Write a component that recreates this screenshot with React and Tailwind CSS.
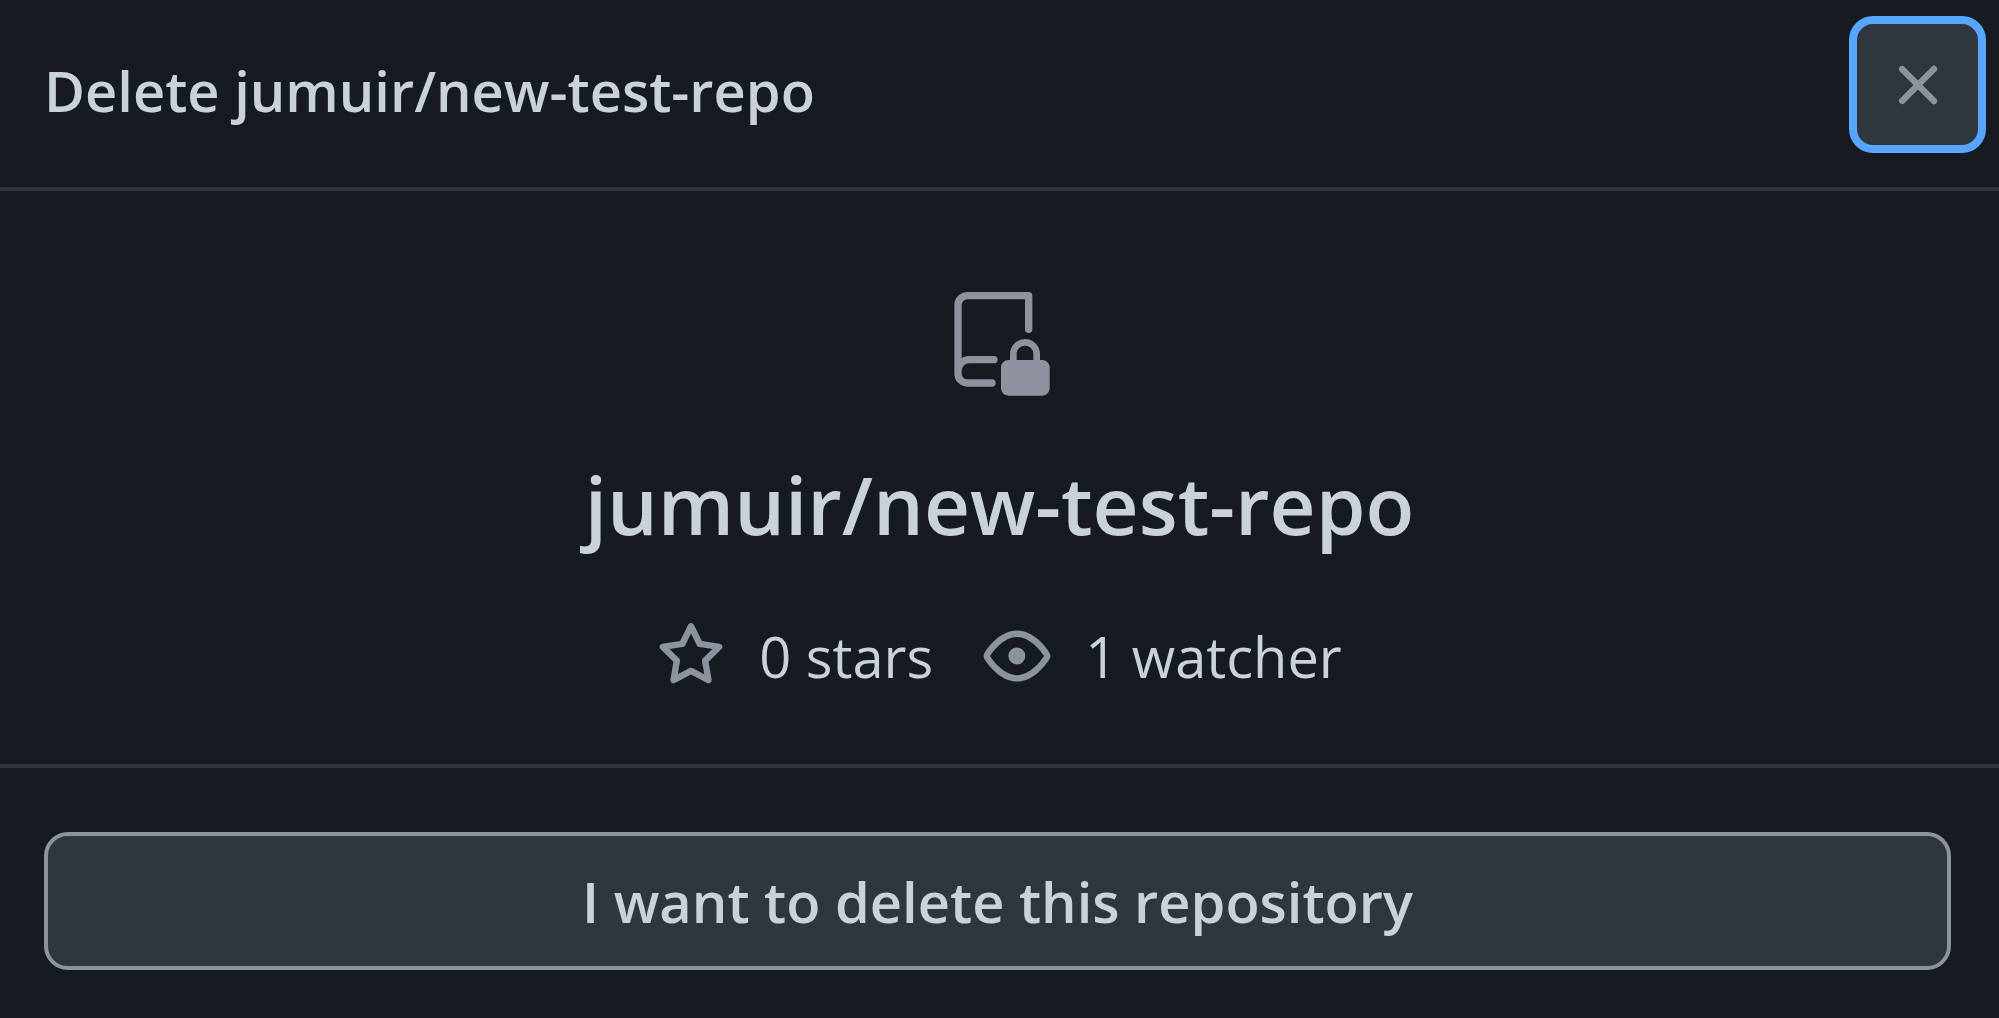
function CloseIcon() {
  return (
    <svg viewBox="0 0 16 16" className="size-17 fill-[#8b949e]" aria-hidden="true">
      <path d="M3.72 3.72a.75.75 0 0 1 1.06 0L8 6.94l3.22-3.22a.75.75 0 1 1 1.06 1.06L9.06 8l3.22 3.22a.75.75 0 1 1-1.06 1.06L8 9.06l-3.22 3.22a.75.75 0 0 1-1.06-1.06L6.94 8 3.72 4.78a.75.75 0 0 1 0-1.06Z" />
    </svg>
  );
}

function RepoLockedIcon() {
  return (
    <svg viewBox="0 0 288 312" className="ml-1 h-26 w-24 text-[#8d929e]" fill="none" stroke="currentColor" strokeLinecap="round" aria-hidden="true">
      <path strokeWidth="22" strokeLinejoin="round" d="M224 112V11H40a28 28 0 0 0-28 28v206a28 28 0 0 0 28 28h74M120 203H46a34 34 0 0 0-34 34" />
      <path strokeWidth="20" d="M178 212v-26a35 35 0 0 1 70 0v26" />
      <rect x="141" y="204" width="146" height="107" rx="22" fill="currentColor" stroke="none" />
    </svg>
  );
}

function StarIcon() {
  return (
    <svg viewBox="0 0 16 16" className="size-17 fill-[#8b949e]" aria-hidden="true">
      <path d="M8 .25a.75.75 0 0 1 .673.418l1.882 3.815 4.21.612a.75.75 0 0 1 .416 1.279l-3.046 2.97.719 4.192a.751.751 0 0 1-1.088.791L8 12.347l-3.766 1.98a.75.75 0 0 1-1.088-.79l.72-4.194L.818 6.374a.75.75 0 0 1 .416-1.28l4.21-.611L7.327.668A.75.75 0 0 1 8 .25Zm0 2.445L6.615 5.5a.75.75 0 0 1-.564.41l-3.097.45 2.24 2.184a.75.75 0 0 1 .216.664l-.528 3.084 2.769-1.456a.75.75 0 0 1 .698 0l2.77 1.456-.53-3.084a.75.75 0 0 1 .216-.664l2.24-2.183-3.096-.45a.75.75 0 0 1-.564-.41L8 2.694Z" />
    </svg>
  );
}

function EyeIcon() {
  return (
    <svg viewBox="0 0 16 16" className="size-17 fill-[#8b949e]" aria-hidden="true">
      <path d="M8 2c1.981 0 3.671.992 4.933 2.078 1.27 1.091 2.187 2.345 2.637 3.023a1.62 1.62 0 0 1 0 1.798c-.45.678-1.367 1.932-2.637 3.023C11.67 13.008 9.981 14 8 14c-1.981 0-3.671-.992-4.933-2.078C1.797 10.83.88 9.576.43 8.898a1.62 1.62 0 0 1 0-1.798c.45-.677 1.367-1.931 2.637-3.022C4.33 2.992 6.019 2 8 2ZM1.679 7.932a.12.12 0 0 0 0 .136c.411.622 1.241 1.75 2.366 2.717C5.176 11.758 6.527 12.5 8 12.5c1.473 0 2.825-.742 3.955-1.715 1.124-.967 1.954-2.096 2.366-2.717a.12.12 0 0 0 0-.136c-.412-.621-1.242-1.75-2.366-2.717C10.824 4.242 9.473 3.5 8 3.5c-1.473 0-2.825.742-3.955 1.715-1.124.967-1.954 2.096-2.366 2.717ZM8 10a2 2 0 1 1-.001-3.999A2 2 0 0 1 8 10Z" />
    </svg>
  );
}

export default function App() {
  return (
    <main
      role="dialog"
      aria-labelledby="dialog-title"
      className="flex min-h-screen flex-col bg-[#161b22] font-['Open_Sans','Noto_Sans',sans-serif] text-[#c9d1d9]"
    >
      <header className="flex items-start justify-between border-b-4 border-[#30363d] pt-4 pr-[13px] pb-[34px] pl-11">
        <h1 id="dialog-title" className="pt-[34px] text-[56px] leading-20 font-semibold">
          Delete jumuir/new-test-repo
        </h1>
        <button
          type="button"
          aria-label="Close"
          className="flex size-[137px] items-center justify-center rounded-3xl border-8 border-[#58a6ff] bg-[#30363d]"
        >
          <CloseIcon />
        </button>
      </header>

      <section className="flex flex-col items-center border-b-4 border-[#30363d] pt-[101px] pb-[68px]">
        <RepoLockedIcon />
        <h2 className="mt-[50px] text-[80px] leading-[116px] font-semibold">jumuir/new-test-repo</h2>
        <ul className="mt-[54px] flex items-center gap-[50px] text-[56px] leading-20">
          <li className="flex items-center gap-[34px]">
            <StarIcon />
            0 stars
          </li>
          <li className="flex items-center gap-[34px]">
            <EyeIcon />
            1 watcher
          </li>
        </ul>
      </section>

      <footer className="pt-16 pr-12 pb-12 pl-11">
        <button
          type="button"
          className="flex h-[138px] w-full items-center justify-center rounded-3xl border-4 border-[#8b949e] bg-[#30363d] text-[56px] leading-20 font-semibold"
        >
          I want to delete this repository
        </button>
      </footer>
    </main>
  );
}
